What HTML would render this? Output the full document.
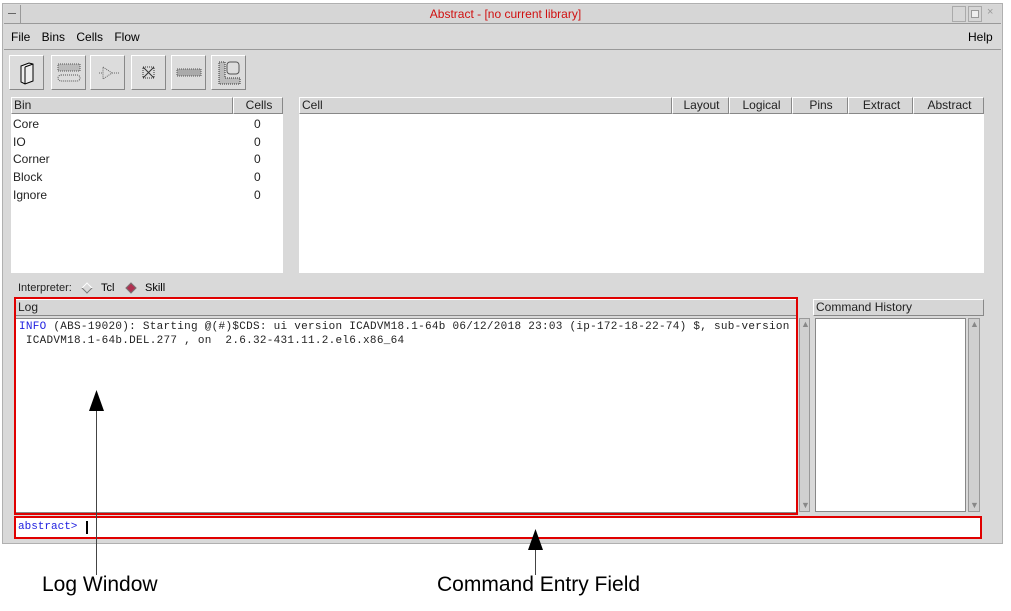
<!DOCTYPE html>
<html><head><meta charset="utf-8"><style>
*{margin:0;padding:0;box-sizing:border-box}
body{width:1011px;height:611px;background:#fff;position:relative;overflow:hidden;font-family:"Liberation Sans",sans-serif;font-size:12px;color:#000}
.a{position:absolute}
.win{left:2px;top:3px;width:1001px;height:541px;background:#d9d9d9;border:1px solid #b0b0b0}
.btn{position:absolute;top:55px;width:35px;height:35px;background:#dcdcdc;border:1px solid;border-color:#fff #888 #888 #fff}
.hdr{position:absolute;background:#d6d6d6;border:1px solid;border-color:#fff #888 #888 #fff;font-size:12px;line-height:15px;padding-left:2px;color:#222}
.white{position:absolute;background:#fff}
.mono{font-family:"Liberation Mono",monospace;font-size:11px}
.sb{position:absolute;background:#d0d0d0;border:1px solid #999}
.red{position:absolute;border:2px solid #e00000}
</style></head><body>
<div class="a win"></div>
<div class="a" style="left:4px;top:5px;width:997px;height:19px;background:#d6d6d6;border-bottom:1px solid #999"></div>
<div class="a" style="left:4px;top:5px;width:17px;height:18px;border-right:1px solid #999"></div>
<div class="a" style="left:8px;top:13px;width:8px;height:1px;background:#666"></div>
<div class="a" style="left:0;top:7px;width:1011px;text-align:center;color:#d01010;font-size:12px">Abstract - [no current library]</div>
<div class="a" style="left:952px;top:6px;width:14px;height:16px;border:1px solid #aaa"></div>
<div class="a" style="left:968px;top:6px;width:14px;height:16px;border:1px solid #aaa"></div>
<div class="a" style="left:971px;top:10px;width:8px;height:8px;border:1px solid #999;background:#eee"></div>
<div class="a" style="left:987px;top:6px;color:#999;font-size:11px">×</div>
<div class="a" style="left:11px;top:30px;word-spacing:8px">File Bins Cells Flow</div>
<div class="a" style="left:968px;top:30px">Help</div>
<div class="a" style="left:4px;top:49px;width:997px;height:1px;background:#999"></div>
<div class="btn" style="left:9px"><svg width="33" height="33"><path d="M11 10 L19 7 L23 8 L23 25 L15 28 L11 26 Z" fill="#eee" stroke="#000"/><path d="M15 11 L23 8 M15 11 L15 28" stroke="#000" fill="none"/></svg></div>
<div class="btn" style="left:51px"><svg width="33" height="33"><rect x="6" y="8" width="22" height="7" fill="#bbb" stroke="#555" stroke-dasharray="1 1"/><rect x="6" y="19" width="22" height="6" rx="3" fill="none" stroke="#555" stroke-dasharray="1 1"/></svg></div>
<div class="btn" style="left:90px"><svg width="33" height="33"><path d="M8 17 H12 M12 11 L21 17 L12 23 Z M21 17 H28" fill="none" stroke="#666" stroke-dasharray="1 1"/></svg></div>
<div class="btn" style="left:131px"><svg width="33" height="33"><rect x="11" y="11" width="11" height="11" fill="none" stroke="#333" stroke-dasharray="1 1"/><path d="M11 11 L22 22 M22 11 L11 22" stroke="#333"/></svg></div>
<div class="btn" style="left:171px"><svg width="33" height="33"><rect x="5" y="13" width="24" height="7" fill="#aaa" stroke="#555" stroke-dasharray="1 1"/></svg></div>
<div class="btn" style="left:211px"><svg width="33" height="33"><path d="M7 6 H13 V22 H28 V28 H7 Z" fill="#bbb" stroke="#333" stroke-dasharray="1 1"/><rect x="15" y="6" width="12" height="12" rx="3" fill="#ddd" stroke="#555"/></svg></div>
<div class="white" style="left:11px;top:97px;width:272px;height:176px"></div>
<div class="hdr" style="left:11px;top:97px;width:222px;height:17px">Bin</div>
<div class="hdr" style="left:233px;top:97px;width:50px;height:17px;text-align:center">Cells</div>
<div class="a" style="left:13px;top:116px;line-height:17.7px;color:#222">Core<br>IO<br>Corner<br>Block<br>Ignore</div>
<div class="a" style="left:254px;top:116px;line-height:17.7px;color:#222">0<br>0<br>0<br>0<br>0</div>
<div class="white" style="left:299px;top:97px;width:685px;height:176px"></div>
<div class="hdr" style="left:299px;top:97px;width:373px;height:17px">Cell</div>
<div class="hdr" style="left:672px;top:97px;width:57px;height:17px;text-align:center">Layout</div>
<div class="hdr" style="left:729px;top:97px;width:63px;height:17px;text-align:center">Logical</div>
<div class="hdr" style="left:792px;top:97px;width:56px;height:17px;text-align:center">Pins</div>
<div class="hdr" style="left:848px;top:97px;width:65px;height:17px;text-align:center">Extract</div>
<div class="hdr" style="left:913px;top:97px;width:71px;height:17px;text-align:center">Abstract</div>
<div class="a" style="left:18px;top:282px;font-size:11px;color:#222">Interpreter:</div>
<div class="a" style="left:83px;top:284px;width:8px;height:8px;transform:rotate(45deg);border:1px solid;border-color:#fff #777 #777 #fff;background:#d9d9d9"></div>
<div class="a" style="left:101px;top:282px;font-size:11px">Tcl</div>
<div class="a" style="left:127px;top:284px;width:8px;height:8px;transform:rotate(45deg);background:#b03050;border:1px solid #777"></div>
<div class="a" style="left:145px;top:282px;font-size:11px">Skill</div>
<div class="hdr" style="left:15px;top:299px;width:782px;height:17px">Log</div>
<div class="white" style="left:15px;top:318px;width:782px;height:195px;border:1px solid #888"></div>
<div class="a mono" style="left:19px;top:320px;line-height:14px;white-space:pre;color:#222;letter-spacing:0.28px"><span style="color:#2020e0">INFO</span> (ABS-19020): Starting @(#)$CDS: ui version ICADVM18.1-64b 06/12/2018 23:03 (ip-172-18-22-74) $, sub-version
 ICADVM18.1-64b.DEL.277 , on  2.6.32-431.11.2.el6.x86_64</div>
<div class="sb" style="left:799px;top:318px;width:11px;height:194px"></div>
<div class="a" style="left:801px;top:319px;font-size:9px;color:#888">▲</div>
<div class="a" style="left:801px;top:500px;font-size:9px;color:#888">▼</div>
<div class="red" style="left:14px;top:297px;width:784px;height:218px"></div>
<div class="hdr" style="left:813px;top:299px;width:171px;height:17px">Command History</div>
<div class="white" style="left:815px;top:318px;width:151px;height:194px;border:1px solid #888"></div>
<div class="sb" style="left:968px;top:318px;width:12px;height:194px"></div>
<div class="a" style="left:970px;top:319px;font-size:9px;color:#888">▲</div>
<div class="a" style="left:970px;top:500px;font-size:9px;color:#888">▼</div>
<div class="white" style="left:15px;top:518px;width:965px;height:19px"></div>
<div class="a mono" style="left:18px;top:521px;color:#2020e0">abstract&gt;</div>
<div class="a" style="left:86px;top:521px;width:2px;height:13px;background:#000"></div>
<div class="red" style="left:14px;top:516px;width:968px;height:23px"></div>
<div class="a" style="left:96px;top:405px;width:1px;height:170px;background:#444"></div>
<svg class="a" style="left:88px;top:390px" width="17" height="22"><path d="M8.5 0 L16 21 L1 21 Z" fill="#000"/></svg>
<div class="a" style="left:535px;top:545px;width:1px;height:30px;background:#444"></div>
<svg class="a" style="left:527px;top:529px" width="17" height="22"><path d="M8.5 0 L16 21 L1 21 Z" fill="#000"/></svg>
<div class="a" style="left:42px;top:573px;font-size:21px">Log Window</div>
<div class="a" style="left:437px;top:573px;font-size:21px">Command Entry Field</div>
</body></html>
